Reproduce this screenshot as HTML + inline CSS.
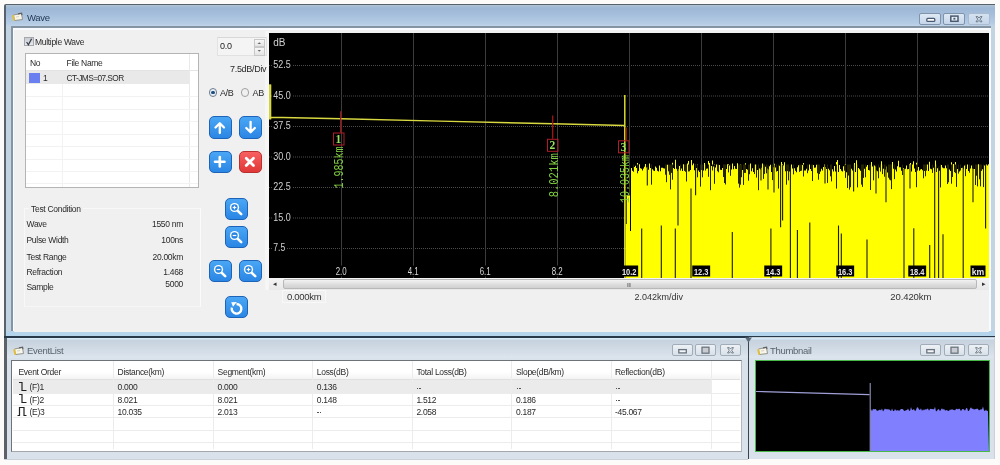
<!DOCTYPE html>
<html><head><meta charset="utf-8">
<style>
*{box-sizing:border-box;margin:0;padding:0}
html,body{width:1000px;height:465px;overflow:hidden;will-change:transform;background:#fcfbf9;font-family:"Liberation Sans",sans-serif;font-size:9px;color:#2a2a2a}
.a{position:absolute}
.t{position:absolute;white-space:nowrap;line-height:10px;letter-spacing:-0.3px}
.frame{position:absolute;border:2px solid #4a5866;}
.btn{position:absolute;width:22px;height:12px;border:1px solid #7f93ab;border-radius:2px;background:linear-gradient(#dfe9f5,#c5d6ea)}
.ibtn{position:absolute;width:21px;height:12px;border:1px solid #a0acb8;border-radius:2px;background:linear-gradient(#eef2f6,#d8e0e8)}
.bb{position:absolute;width:22.5px;height:22.5px;border-radius:5px;border:1.5px solid #1d63b8;background:linear-gradient(#4aa6f4,#2a86e4)}
.cell{position:absolute;white-space:nowrap;line-height:10px;letter-spacing:-0.3px}
</style></head><body>
<!-- Wave window -->
<div class="a" style="left:4px;top:3.5px;width:991px;height:334.5px;background:#56626c;border-top-left-radius:2px"></div>
<div class="a" style="left:6px;top:5.3px;width:989px;height:330.5px;background:#c2d4e2"></div>
<div class="a" style="left:6px;top:331px;width:989px;height:4.8px;background:#b4d4ec"></div>
<div class="a" style="left:6px;top:5.3px;width:989px;height:21px;background:linear-gradient(#b2c4d4 0,#9db7d5 15%,#a5bedb 45%,#b5cce5 88%,#c0d4e8 100%)"></div>
<!-- client -->
<div class="a" style="left:11px;top:26.2px;width:980px;height:305.3px;background:#8494a2"></div>
<div class="a" style="left:12.5px;top:27.9px;width:978.3px;height:303.6px;background:#f8fbff"></div>
<div class="a" style="left:14px;top:29.5px;width:975px;height:302px;background:#f0f0f0"></div>
<div class="a" style="left:264.5px;top:31px;width:5px;height:259px;background:#f6f6f6"></div>
<!-- title -->
<svg class="a" style="left:12px;top:12.2px" width="12" height="9"><path d="M1.5,3 L9.5,1.5 L10.5,7.5 L2.5,8.5 Z" fill="#f8f6ea" stroke="#8a8a80" stroke-width="0.9"/><path d="M1,3.2 L2.2,8.6" stroke="#e8c030" stroke-width="1.8"/><path d="M6,1.8 L9.6,1.2 L9.9,3.2" fill="none" stroke="#606060" stroke-width="1.2"/><path d="M4,5 L7,4.6" stroke="#c8c8c0" stroke-width="0.8"/></svg>
<div class="t" style="left:27px;top:13px;font-size:9.5px;color:#1e3550">Wave</div>
<div class="btn" style="left:919px;top:12.5px"><svg width="22" height="12" style="position:absolute;left:-1px;top:-1px"><rect x="7.8" y="5.4" width="8" height="3" fill="#fff" stroke="#4a5a70" stroke-width="1.3" rx="1"/></svg></div>
<div class="btn" style="left:943px;top:12.5px"><svg width="22" height="12" style="position:absolute;left:-1px;top:-1px"><rect x="7.8" y="3.1" width="7.2" height="5.2" fill="#e8eef4" stroke="#4a5a70" stroke-width="1.5"/><rect x="10.4" y="4.8" width="2" height="1.8" fill="#4a5a70"/></svg></div>
<div class="btn" style="left:967.5px;top:12.5px;background:linear-gradient(#d4e2f0,#c4d6ea);border-color:#aabbd0"><svg width="22" height="12" style="position:absolute;left:-1px;top:-1px"><path d="M8,3.6 L9.8,3.6 L11,5 L12.2,3.6 L14,3.6 L12.2,6.2 L14,8.8 L12.2,8.8 L11,7.4 L9.8,8.8 L8,8.8 L9.8,6.2 Z" fill="none" stroke="#707a86" stroke-width="1"/></svg></div>

<!-- left panel -->
<div class="a" style="left:24.3px;top:36.8px;width:9.3px;height:9.3px;border:1px solid #a4a8ac;background:linear-gradient(#c8ccd2,#e8eaee)"></div>
<svg class="a" style="left:24.3px;top:36.8px" width="10" height="10"><path d="M2.6,5 L4.4,7.8 L7.6,1.8" fill="none" stroke="#3a3e48" stroke-width="1.3"/></svg>
<div class="t" style="left:35px;top:37px;font-size:8.5px">Multiple Wave</div>

<div class="a" style="left:25px;top:53px;width:173.5px;height:134.5px;border:1px solid #b4b4b4;background:#fff"></div>
<div class="a" style="left:26px;top:70px;width:171.5px;height:1px;background:#e4e4e4"></div>
<div class="a" style="left:26px;top:71px;width:163px;height:13px;background:#e9e9e9"></div>
<div class="a" style="left:62px;top:84px;width:1px;height:103px;background:#f2f2f2"></div>
<div class="a" style="left:188.5px;top:54px;width:1px;height:133px;background:#eaeaea"></div>
<div class="a" style="left:26px;top:96.2px;width:171.5px;height:1px;background:#f2f2f2"></div>
<div class="a" style="left:26px;top:108.7px;width:171.5px;height:1px;background:#f2f2f2"></div>
<div class="a" style="left:26px;top:121.1px;width:171.5px;height:1px;background:#f2f2f2"></div>
<div class="a" style="left:26px;top:133.6px;width:171.5px;height:1px;background:#f2f2f2"></div>
<div class="a" style="left:26px;top:146.1px;width:171.5px;height:1px;background:#f2f2f2"></div>
<div class="a" style="left:26px;top:158.6px;width:171.5px;height:1px;background:#f2f2f2"></div>
<div class="a" style="left:26px;top:171.1px;width:171.5px;height:1px;background:#f2f2f2"></div>
<div class="a" style="left:26px;top:182.6px;width:171.5px;height:1px;background:#f2f2f2"></div>
<div class="t" style="left:30px;top:58px;font-size:8.5px">No</div>
<div class="t" style="left:66.5px;top:58px;font-size:8.5px">File Name</div>
<div class="a" style="left:29px;top:72.5px;width:11px;height:10.5px;background:#6a80f0"></div>
<div class="t" style="left:43px;top:73px;font-size:8.5px">1</div>
<div class="t" style="left:66.5px;top:73.2px;font-size:8.3px;letter-spacing:-0.55px">CT-JMS=07.SOR</div>

<div class="a" style="left:24px;top:208px;width:177px;height:99px;border:1px solid #f8f8f8;border-right-color:#fbfbfb;border-bottom-color:#f6f6f6"></div>
<div class="t" style="left:29px;top:204px;padding:0 2px;background:#f0f0f0;font-size:8.5px">Test Condition</div>
<div class="t" style="left:26.5px;top:219px;font-size:8.5px">Wave</div>
<div class="t" style="left:26.5px;top:235px;font-size:8.5px">Pulse Width</div>
<div class="t" style="left:26.5px;top:252px;font-size:8.5px">Test Range</div>
<div class="t" style="left:26.5px;top:267px;font-size:8.5px">Refraction</div>
<div class="t" style="left:26.5px;top:282px;font-size:8.5px">Sample</div>
<div class="t" style="right:817px;top:219px;font-size:8.5px">1550 nm</div>
<div class="t" style="right:817px;top:235px;font-size:8.5px">100ns</div>
<div class="t" style="right:817px;top:252px;font-size:8.5px">20.00km</div>
<div class="t" style="right:817px;top:267px;font-size:8.5px">1.468</div>
<div class="t" style="right:817px;top:279px;font-size:8.5px">5000</div>

<!-- spinbox -->
<div class="a" style="left:217px;top:37px;width:49.5px;height:19px;border:1px solid #e2e2e2;border-top-color:#d8d8d8;background:#f4f4f4"></div>
<div class="t" style="left:220px;top:40.5px;font-size:9px;color:#222">0.0</div>
<div class="a" style="left:254px;top:39px;width:10.5px;height:8px;border:1px solid #c8c8c8;background:linear-gradient(#f8f8f8,#e4e4e4)"></div>
<div class="a" style="left:254px;top:47px;width:10.5px;height:8.5px;border:1px solid #c8c8c8;background:linear-gradient(#f8f8f8,#e4e4e4)"></div>
<svg class="a" style="left:254px;top:39px" width="11" height="17"><path d="M3.6,5 L7,5 L5.3,3.2 Z" fill="#666"/><path d="M3.6,11 L7,11 L5.3,12.8 Z" fill="#666"/></svg>

<div class="t" style="left:230px;top:64.2px;font-size:9px;letter-spacing:-0.3px">7.5dB/Div</div>

<!-- radios -->
<div class="a" style="left:208.5px;top:88px;width:8.5px;height:8.5px;border-radius:50%;border:1px solid #708090;background:#e8eef4"><div class="a" style="left:1.5px;top:1.5px;width:3.5px;height:3.5px;border-radius:50%;background:#1c4e80"></div></div>
<div class="t" style="left:220px;top:87.5px;font-size:9px;letter-spacing:-0.4px">A/B</div>
<div class="a" style="left:240.5px;top:88px;width:8.5px;height:8.5px;border-radius:50%;border:1px solid #a0a0a0;background:#f0f0f0"></div>
<div class="t" style="left:252.5px;top:87.5px;font-size:9px;letter-spacing:-0.3px">AB</div>

<!-- buttons -->
<div class="bb" style="left:209px;top:116.3px;"><svg width="20" height="20" style="position:absolute;left:0;top:0"><path d="M9.8,16 V6.5 M5.5,10.5 L9.8,6.2 L14,10.5" stroke="#fff" stroke-width="2.3" fill="none" stroke-linecap="round" stroke-linejoin="round"/></svg></div>
<div class="bb" style="left:239.4px;top:116.3px;"><svg width="20" height="20" style="position:absolute;left:0;top:0"><path d="M10.6,4.8 V15 M6.3,11 L10.6,15.3 L14.8,11" stroke="#fff" stroke-width="2.3" fill="none" stroke-linecap="round" stroke-linejoin="round"/></svg></div>
<div class="bb" style="left:209px;top:150.6px;"><svg width="20" height="20" style="position:absolute;left:0;top:0"><path d="M9.8,5 V14.5 M5,9.8 H14.5" stroke="#fff" stroke-width="2.6" fill="none" stroke-linecap="round"/></svg></div>
<div class="bb" style="left:239.4px;top:150.6px;border-color:#b83030;background:linear-gradient(#f86060,#e03838)"><svg width="20" height="20" style="position:absolute;left:0;top:0"><path d="M6.2,6.2 L13.5,13.5 M13.5,6.2 L6.2,13.5" stroke="#fff" stroke-width="2.8" fill="none" stroke-linecap="round"/></svg></div>
<div class="bb" style="left:225.3px;top:197.5px;"><svg width="20" height="20" style="position:absolute;left:0;top:0"><circle cx="8.5" cy="8.5" r="4.6" fill="#fff"/><circle cx="8.5" cy="8.5" r="3.2" fill="#2a86e4"/><path d="M11.8,11.8 L15.2,15.2" stroke="#fff" stroke-width="2.6" stroke-linecap="round"/><path d="M6.7,8.5 H10.3" stroke="#fff" stroke-width="1.2"/><path d="M8.5,6.7 V10.3" stroke="#fff" stroke-width="1.2"/></svg></div>
<div class="bb" style="left:225.3px;top:225.5px;"><svg width="20" height="20" style="position:absolute;left:0;top:0"><circle cx="8.5" cy="8.5" r="4.6" fill="#fff"/><circle cx="8.5" cy="8.5" r="3.2" fill="#2a86e4"/><path d="M11.8,11.8 L15.2,15.2" stroke="#fff" stroke-width="2.6" stroke-linecap="round"/><path d="M6.7,8.5 H10.3" stroke="#fff" stroke-width="1.2"/></svg></div>
<div class="bb" style="left:209px;top:259.8px;"><svg width="20" height="20" style="position:absolute;left:0;top:0"><circle cx="8.5" cy="8.5" r="4.6" fill="#fff"/><circle cx="8.5" cy="8.5" r="3.2" fill="#2a86e4"/><path d="M11.8,11.8 L15.2,15.2" stroke="#fff" stroke-width="2.6" stroke-linecap="round"/><path d="M6.7,8.5 H10.3" stroke="#fff" stroke-width="1.2"/></svg></div>
<div class="bb" style="left:239.4px;top:259.8px;"><svg width="20" height="20" style="position:absolute;left:0;top:0"><circle cx="8.5" cy="8.5" r="4.6" fill="#fff"/><circle cx="8.5" cy="8.5" r="3.2" fill="#2a86e4"/><path d="M11.8,11.8 L15.2,15.2" stroke="#fff" stroke-width="2.6" stroke-linecap="round"/><path d="M6.7,8.5 H10.3" stroke="#fff" stroke-width="1.2"/><path d="M8.5,6.7 V10.3" stroke="#fff" stroke-width="1.2"/></svg></div>
<div class="bb" style="left:225.3px;top:295.6px;"><svg width="20" height="20" style="position:absolute;left:0;top:0"><path d="M10.5,7 A4.8,4.8 0 1 1 5.9,10.6" stroke="#fff" stroke-width="2.4" fill="none" stroke-linecap="butt"/><path d="M5.2,5.2 L10.8,5.0 L7.0,9.8 Z" fill="#fff"/></svg></div>

<!-- chart -->
<div class="a" style="left:269px;top:32.5px;width:720px;height:245.5px;overflow:hidden">
<svg width="720" height="245.5" viewBox="0 0 720 245.5" style="position:absolute;left:0;top:0">
<rect width="720" height="245.5" fill="#000"/>
<line x1="0" y1="32.5" x2="720" y2="32.5" stroke="#4c4c4c" stroke-width="1" stroke-dasharray="1,1"/>
<line x1="0" y1="63.0" x2="720" y2="63.0" stroke="#4c4c4c" stroke-width="1" stroke-dasharray="1,1"/>
<line x1="0" y1="93.5" x2="720" y2="93.5" stroke="#4c4c4c" stroke-width="1" stroke-dasharray="1,1"/>
<line x1="0" y1="124.0" x2="720" y2="124.0" stroke="#4c4c4c" stroke-width="1" stroke-dasharray="1,1"/>
<line x1="0" y1="154.5" x2="720" y2="154.5" stroke="#4c4c4c" stroke-width="1" stroke-dasharray="1,1"/>
<line x1="0" y1="185.0" x2="720" y2="185.0" stroke="#4c4c4c" stroke-width="1" stroke-dasharray="1,1"/>
<line x1="0" y1="215.5" x2="720" y2="215.5" stroke="#4c4c4c" stroke-width="1" stroke-dasharray="1,1"/>
<line x1="72.5" y1="0" x2="72.5" y2="245.5" stroke="#3c3c3c" stroke-width="1"/>
<line x1="144.5" y1="0" x2="144.5" y2="245.5" stroke="#3c3c3c" stroke-width="1"/>
<line x1="216.5" y1="0" x2="216.5" y2="245.5" stroke="#3c3c3c" stroke-width="1"/>
<line x1="288.5" y1="0" x2="288.5" y2="245.5" stroke="#3c3c3c" stroke-width="1"/>
<line x1="360.5" y1="0" x2="360.5" y2="245.5" stroke="#3c3c3c" stroke-width="1"/>
<line x1="432.5" y1="0" x2="432.5" y2="245.5" stroke="#3c3c3c" stroke-width="1"/>
<line x1="504.5" y1="0" x2="504.5" y2="245.5" stroke="#3c3c3c" stroke-width="1"/>
<line x1="576.5" y1="0" x2="576.5" y2="245.5" stroke="#3c3c3c" stroke-width="1"/>
<line x1="648.5" y1="0" x2="648.5" y2="245.5" stroke="#3c3c3c" stroke-width="1"/>
<path d="M362,245.5 L362,134.9 L363,134.9 L363,137.8 L364,137.8 L364,134.9 L365,134.9 L365,134.1 L366,134.1 L366,132.8 L367,132.8 L367,135.0 L368,135.0 L368,130.1 L369,130.1 L369,138.1 L370,138.1 L370,131.2 L371,131.2 L371,135.3 L372,135.3 L372,135.7 L373,135.7 L373,137.4 L374,137.4 L374,135.6 L375,135.6 L375,133.8 L376,133.8 L376,131.1 L377,131.1 L377,134.4 L378,134.4 L378,134.0 L379,134.0 L379,136.7 L380,136.7 L380,130.6 L381,130.6 L381,135.0 L382,135.0 L382,136.2 L383,136.2 L383,136.3 L384,136.3 L384,137.5 L385,137.5 L385,138.0 L386,138.0 L386,133.4 L387,133.4 L387,134.8 L388,134.8 L388,137.7 L389,137.7 L389,138.5 L390,138.5 L390,132.5 L391,132.5 L391,138.2 L392,138.2 L392,134.8 L393,134.8 L393,134.8 L394,134.8 L394,135.3 L395,135.3 L395,135.4 L396,135.4 L396,138.5 L397,138.5 L397,136.3 L398,136.3 L398,131.7 L399,131.7 L399,132.6 L400,132.6 L400,134.5 L401,134.5 L401,135.6 L402,135.6 L402,134.2 L403,134.2 L403,129.7 L404,129.7 L404,135.1 L405,135.1 L405,135.9 L406,135.9 L406,126.7 L407,126.7 L407,135.7 L408,135.7 L408,137.9 L409,137.9 L409,136.3 L410,136.3 L410,133.1 L411,133.1 L411,133.6 L412,133.6 L412,135.4 L413,135.4 L413,137.9 L414,137.9 L414,131.3 L415,131.3 L415,135.7 L416,135.7 L416,133.6 L417,133.6 L417,136.0 L418,136.0 L418,130.6 L419,130.6 L419,128.0 L420,128.0 L420,136.4 L421,136.4 L421,136.9 L422,136.9 L422,127.0 L423,127.0 L423,132.3 L424,132.3 L424,130.6 L425,130.6 L425,137.3 L426,137.3 L426,131.8 L427,131.8 L427,135.1 L428,135.1 L428,131.5 L429,131.5 L429,137.4 L430,137.4 L430,139.0 L431,139.0 L431,134.7 L432,134.7 L432,137.0 L433,137.0 L433,135.0 L434,135.0 L434,137.5 L435,137.5 L435,129.9 L436,129.9 L436,136.3 L437,136.3 L437,135.8 L438,135.8 L438,135.6 L439,135.6 L439,128.0 L440,128.0 L440,130.0 L441,130.0 L441,132.2 L442,132.2 L442,133.1 L443,133.1 L443,127.4 L444,127.4 L444,133.4 L445,133.4 L445,131.4 L446,131.4 L446,134.6 L447,134.6 L447,131.4 L448,131.4 L448,133.1 L449,133.1 L449,132.7 L450,132.7 L450,131.9 L451,131.9 L451,136.7 L452,136.7 L452,137.0 L453,137.0 L453,135.0 L454,135.0 L454,132.4 L455,132.4 L455,132.9 L456,132.9 L456,137.4 L457,137.4 L457,136.0 L458,136.0 L458,131.2 L459,131.2 L459,131.0 L460,131.0 L460,132.6 L461,132.6 L461,136.9 L462,136.9 L462,136.6 L463,136.6 L463,130.4 L464,130.4 L464,136.2 L465,136.2 L465,132.9 L466,132.9 L466,135.8 L467,135.8 L467,135.9 L468,135.9 L468,130.2 L469,130.2 L469,133.2 L470,133.2 L470,134.8 L471,134.8 L471,131.4 L472,131.4 L472,138.1 L473,138.1 L473,137.1 L474,137.1 L474,134.0 L475,134.0 L475,132.8 L476,132.8 L476,130.3 L477,130.3 L477,136.1 L478,136.1 L478,136.7 L479,136.7 L479,135.0 L480,135.0 L480,136.3 L481,136.3 L481,130.6 L482,130.6 L482,138.2 L483,138.2 L483,135.3 L484,135.3 L484,138.9 L485,138.9 L485,136.0 L486,136.0 L486,131.4 L487,131.4 L487,135.0 L488,135.0 L488,137.0 L489,137.0 L489,138.5 L490,138.5 L490,135.6 L491,135.6 L491,136.6 L492,136.6 L492,134.7 L493,134.7 L493,130.5 L494,130.5 L494,137.9 L495,137.9 L495,137.0 L496,137.0 L496,133.7 L497,133.7 L497,138.1 L498,138.1 L498,135.6 L499,135.6 L499,136.4 L500,136.4 L500,133.3 L501,133.3 L501,131.7 L502,131.7 L502,139.1 L503,139.1 L503,135.2 L504,135.2 L504,134.3 L505,134.3 L505,130.7 L506,130.7 L506,134.5 L507,134.5 L507,133.9 L508,133.9 L508,137.9 L509,137.9 L509,137.8 L510,137.8 L510,132.8 L511,132.8 L511,134.0 L512,134.0 L512,129.0 L513,129.0 L513,130.9 L514,130.9 L514,132.4 L515,132.4 L515,129.3 L516,129.3 L516,138.2 L517,138.2 L517,134.2 L518,134.2 L518,132.8 L519,132.8 L519,137.2 L520,137.2 L520,138.6 L521,138.6 L521,138.5 L522,138.5 L522,131.5 L523,131.5 L523,135.6 L524,135.6 L524,133.3 L525,133.3 L525,135.2 L526,135.2 L526,137.7 L527,137.7 L527,139.3 L528,139.3 L528,134.2 L529,134.2 L529,132.2 L530,132.2 L530,136.1 L531,136.1 L531,136.7 L532,136.7 L532,135.6 L533,135.6 L533,131.9 L534,131.9 L534,129.9 L535,129.9 L535,137.6 L536,137.6 L536,137.4 L537,137.4 L537,135.8 L538,135.8 L538,137.7 L539,137.7 L539,137.6 L540,137.6 L540,131.6 L541,131.6 L541,136.0 L542,136.0 L542,138.1 L543,138.1 L543,136.4 L544,136.4 L544,131.9 L545,131.9 L545,134.8 L546,134.8 L546,134.5 L547,134.5 L547,131.7 L548,131.7 L548,136.6 L549,136.6 L549,133.2 L550,133.2 L550,139.1 L551,139.1 L551,138.5 L552,138.5 L552,135.7 L553,135.7 L553,137.6 L554,137.6 L554,133.9 L555,133.9 L555,131.4 L556,131.4 L556,133.9 L557,133.9 L557,136.0 L558,136.0 L558,136.3 L559,136.3 L559,135.7 L560,135.7 L560,137.3 L561,137.3 L561,133.1 L562,133.1 L562,136.0 L563,136.0 L563,136.2 L564,136.2 L564,138.6 L565,138.6 L565,133.0 L566,133.0 L566,138.6 L567,138.6 L567,129.1 L568,129.1 L568,127.0 L569,127.0 L569,138.9 L570,138.9 L570,132.0 L571,132.0 L571,136.1 L572,136.1 L572,137.7 L573,137.7 L573,138.5 L574,138.5 L574,133.3 L575,133.3 L575,134.9 L576,134.9 L576,130.9 L577,130.9 L577,139.3 L578,139.3 L578,132.8 L579,132.8 L579,133.8 L580,133.8 L580,135.8 L581,135.8 L581,135.5 L582,135.5 L582,135.8 L583,135.8 L583,137.5 L584,137.5 L584,135.7 L585,135.7 L585,130.0 L586,130.0 L586,139.1 L587,139.1 L587,127.3 L588,127.3 L588,132.5 L589,132.5 L589,135.1 L590,135.1 L590,136.2 L591,136.2 L591,137.7 L592,137.7 L592,132.3 L593,132.3 L593,134.6 L594,134.6 L594,137.4 L595,137.4 L595,135.8 L596,135.8 L596,137.3 L597,137.3 L597,133.8 L598,133.8 L598,132.0 L599,132.0 L599,136.9 L600,136.9 L600,136.1 L601,136.1 L601,134.2 L602,134.2 L602,129.0 L603,129.0 L603,133.5 L604,133.5 L604,137.7 L605,137.7 L605,132.5 L606,132.5 L606,133.5 L607,133.5 L607,137.5 L608,137.5 L608,138.2 L609,138.2 L609,135.2 L610,135.2 L610,134.4 L611,134.4 L611,135.1 L612,135.1 L612,128.2 L613,128.2 L613,137.4 L614,137.4 L614,135.8 L615,135.8 L615,136.5 L616,136.5 L616,136.5 L617,136.5 L617,133.6 L618,133.6 L618,139.4 L619,139.4 L619,133.5 L620,133.5 L620,135.2 L621,135.2 L621,135.1 L622,135.1 L622,136.7 L623,136.7 L623,129.1 L624,129.1 L624,135.8 L625,135.8 L625,137.2 L626,137.2 L626,136.6 L627,136.6 L627,138.6 L628,138.6 L628,133.2 L629,133.2 L629,127.7 L630,127.7 L630,134.3 L631,134.3 L631,134.2 L632,134.2 L632,137.7 L633,137.7 L633,138.2 L634,138.2 L634,134.9 L635,134.9 L635,136.3 L636,136.3 L636,135.8 L637,135.8 L637,132.4 L638,132.4 L638,136.3 L639,136.3 L639,136.1 L640,136.1 L640,131.3 L641,131.3 L641,129.9 L642,129.9 L642,138.4 L643,138.4 L643,131.6 L644,131.6 L644,128.3 L645,128.3 L645,135.5 L646,135.5 L646,139.1 L647,139.1 L647,129.7 L648,129.7 L648,136.9 L649,136.9 L649,134.0 L650,134.0 L650,137.7 L651,137.7 L651,136.5 L652,136.5 L652,135.9 L653,135.9 L653,137.3 L654,137.3 L654,133.7 L655,133.7 L655,136.7 L656,136.7 L656,136.6 L657,136.6 L657,136.7 L658,136.7 L658,131.5 L659,131.5 L659,138.1 L660,138.1 L660,128.7 L661,128.7 L661,135.8 L662,135.8 L662,136.3 L663,136.3 L663,135.9 L664,135.9 L664,134.8 L665,134.8 L665,138.2 L666,138.2 L666,127.6 L667,127.6 L667,132.6 L668,132.6 L668,135.2 L669,135.2 L669,135.2 L670,135.2 L670,137.8 L671,137.8 L671,137.4 L672,137.4 L672,132.0 L673,132.0 L673,134.6 L674,134.6 L674,135.3 L675,135.3 L675,135.3 L676,135.3 L676,132.6 L677,132.6 L677,135.3 L678,135.3 L678,135.9 L679,135.9 L679,138.3 L680,138.3 L680,136.6 L681,136.6 L681,137.9 L682,137.9 L682,129.2 L683,129.2 L683,134.5 L684,134.5 L684,131.0 L685,131.0 L685,136.2 L686,136.2 L686,129.0 L687,129.0 L687,135.3 L688,135.3 L688,136.1 L689,136.1 L689,137.6 L690,137.6 L690,138.5 L691,138.5 L691,132.7 L692,132.7 L692,134.9 L693,134.9 L693,134.7 L694,134.7 L694,136.2 L695,136.2 L695,132.6 L696,132.6 L696,136.6 L697,136.6 L697,136.0 L698,136.0 L698,131.4 L699,131.4 L699,138.0 L700,138.0 L700,138.2 L701,138.2 L701,135.5 L702,135.5 L702,132.4 L703,132.4 L703,135.4 L704,135.4 L704,135.9 L705,135.9 L705,135.9 L706,135.9 L706,133.7 L707,133.7 L707,136.7 L708,136.7 L708,136.6 L709,136.6 L709,131.3 L710,131.3 L710,138.6 L711,138.6 L711,133.4 L712,133.4 L712,135.3 L713,135.3 L713,136.3 L714,136.3 L714,138.6 L715,138.6 L715,132.5 L716,132.5 L716,135.4 L717,135.4 L717,131.4 L718,131.4 L718,132.5 L719,132.5 L719,131.3 L720,131.3 L720,245.5 Z" fill="#ffff00"/>
<rect x="356.5" y="162.5" width="6" height="83.0" fill="#ffff00"/>
<line x1="357.20000000000005" y1="162.5" x2="357.20000000000005" y2="191.0" stroke="#000" stroke-width="1"/>
<line x1="361.5" y1="127.5" x2="361.5" y2="198.0" stroke="#000" stroke-width="1"/>
<line x1="372.7" y1="195.5" x2="372.7" y2="245.5" stroke="#1c1c00" stroke-width="1.1"/>
<line x1="392.3" y1="192.5" x2="392.3" y2="245.5" stroke="#1c1c00" stroke-width="1.1"/>
<line x1="406.3" y1="195.5" x2="406.3" y2="245.5" stroke="#1c1c00" stroke-width="1.1"/>
<line x1="422.0" y1="155.5" x2="422.0" y2="245.5" stroke="#1c1c00" stroke-width="1.1"/>
<line x1="463.3" y1="199.1" x2="463.3" y2="245.5" stroke="#1c1c00" stroke-width="1.1"/>
<line x1="501.9" y1="195.5" x2="501.9" y2="245.5" stroke="#1c1c00" stroke-width="1.1"/>
<line x1="521.4" y1="133.5" x2="521.4" y2="245.5" stroke="#1c1c00" stroke-width="1.1"/>
<line x1="528.4" y1="197.1" x2="528.4" y2="245.5" stroke="#1c1c00" stroke-width="1.1"/>
<line x1="540.8" y1="189.5" x2="540.8" y2="245.5" stroke="#1c1c00" stroke-width="1.1"/>
<line x1="569.5" y1="192.5" x2="569.5" y2="245.5" stroke="#1c1c00" stroke-width="1.1"/>
<line x1="572.3" y1="200.5" x2="572.3" y2="245.5" stroke="#1c1c00" stroke-width="1.1"/>
<line x1="598.0" y1="206.5" x2="598.0" y2="245.5" stroke="#1c1c00" stroke-width="1.1"/>
<line x1="635.0" y1="135.5" x2="635.0" y2="245.5" stroke="#1c1c00" stroke-width="1.1"/>
<line x1="644.8" y1="195.2" x2="644.8" y2="245.5" stroke="#1c1c00" stroke-width="1.1"/>
<line x1="660.7" y1="211.9" x2="660.7" y2="245.5" stroke="#1c1c00" stroke-width="1.1"/>
<line x1="665.7" y1="133.5" x2="665.7" y2="245.5" stroke="#1c1c00" stroke-width="1.1"/>
<line x1="669.6" y1="133.5" x2="669.6" y2="245.5" stroke="#1c1c00" stroke-width="1.1"/>
<line x1="674.0" y1="201.3" x2="674.0" y2="245.5" stroke="#1c1c00" stroke-width="1.1"/>
<line x1="694.2" y1="133.5" x2="694.2" y2="245.5" stroke="#1c1c00" stroke-width="1.1"/>
<line x1="409.0" y1="131.5" x2="409.0" y2="192.5" stroke="#1c1c00" stroke-width="1.1"/>
<line x1="426.6" y1="131.5" x2="426.6" y2="162.2" stroke="#1c1c00" stroke-width="1.1"/>
<line x1="378.3" y1="131.5" x2="378.3" y2="152.5" stroke="#1c1c00" stroke-width="1.1"/>
<line x1="511.6" y1="131.5" x2="511.6" y2="194.3" stroke="#1c1c00" stroke-width="1.1"/>
<line x1="513.6" y1="131.5" x2="513.6" y2="187.5" stroke="#1c1c00" stroke-width="1.1"/>
<line x1="499.0" y1="131.5" x2="499.0" y2="156.5" stroke="#1c1c00" stroke-width="1.1"/>
<line x1="505.0" y1="131.5" x2="505.0" y2="159.5" stroke="#1c1c00" stroke-width="1.1"/>
<line x1="492.0" y1="131.5" x2="492.0" y2="147.5" stroke="#1c1c00" stroke-width="1.1"/>
<line x1="584.6" y1="131.5" x2="584.6" y2="158.5" stroke="#1c1c00" stroke-width="1.1"/>
<line x1="607.0" y1="131.5" x2="607.0" y2="160.5" stroke="#1c1c00" stroke-width="1.1"/>
<line x1="617.0" y1="131.5" x2="617.0" y2="169.2" stroke="#1c1c00" stroke-width="1.1"/>
<line x1="556.0" y1="131.5" x2="556.0" y2="150.5" stroke="#1c1c00" stroke-width="1.1"/>
<line x1="704.0" y1="131.5" x2="704.0" y2="169.2" stroke="#1c1c00" stroke-width="1.1"/>
<line x1="716.6" y1="131.5" x2="716.6" y2="195.5" stroke="#1c1c00" stroke-width="1.1"/>
<line x1="641.0" y1="131.5" x2="641.0" y2="155.5" stroke="#1c1c00" stroke-width="1.1"/>
<line x1="364.5" y1="131.5" x2="364.5" y2="138.8" stroke="#242400" stroke-width="1"/>
<line x1="368.5" y1="131.5" x2="368.5" y2="140.3" stroke="#242400" stroke-width="1"/>
<line x1="382.5" y1="131.5" x2="382.5" y2="151.7" stroke="#242400" stroke-width="1"/>
<line x1="396.5" y1="131.5" x2="396.5" y2="141.7" stroke="#242400" stroke-width="1"/>
<line x1="397.5" y1="131.5" x2="397.5" y2="149.2" stroke="#242400" stroke-width="1"/>
<line x1="399.5" y1="131.5" x2="399.5" y2="138.3" stroke="#242400" stroke-width="1"/>
<line x1="400.5" y1="131.5" x2="400.5" y2="141.8" stroke="#242400" stroke-width="1"/>
<line x1="401.5" y1="131.5" x2="401.5" y2="156.4" stroke="#242400" stroke-width="1"/>
<line x1="402.5" y1="131.5" x2="402.5" y2="139.9" stroke="#242400" stroke-width="1"/>
<line x1="403.5" y1="131.5" x2="403.5" y2="146.7" stroke="#242400" stroke-width="1"/>
<line x1="411.5" y1="131.5" x2="411.5" y2="137.6" stroke="#242400" stroke-width="1"/>
<line x1="415.5" y1="131.5" x2="415.5" y2="137.9" stroke="#242400" stroke-width="1"/>
<line x1="416.5" y1="131.5" x2="416.5" y2="138.8" stroke="#242400" stroke-width="1"/>
<line x1="417.5" y1="131.5" x2="417.5" y2="148.5" stroke="#242400" stroke-width="1"/>
<line x1="419.5" y1="131.5" x2="419.5" y2="138.5" stroke="#242400" stroke-width="1"/>
<line x1="420.5" y1="131.5" x2="420.5" y2="138.3" stroke="#242400" stroke-width="1"/>
<line x1="428.5" y1="131.5" x2="428.5" y2="144.3" stroke="#242400" stroke-width="1"/>
<line x1="431.5" y1="131.5" x2="431.5" y2="153.6" stroke="#242400" stroke-width="1"/>
<line x1="433.5" y1="131.5" x2="433.5" y2="144.3" stroke="#242400" stroke-width="1"/>
<line x1="436.5" y1="131.5" x2="436.5" y2="137.6" stroke="#242400" stroke-width="1"/>
<line x1="439.5" y1="131.5" x2="439.5" y2="143.8" stroke="#242400" stroke-width="1"/>
<line x1="441.5" y1="131.5" x2="441.5" y2="157.2" stroke="#242400" stroke-width="1"/>
<line x1="443.5" y1="131.5" x2="443.5" y2="137.5" stroke="#242400" stroke-width="1"/>
<line x1="445.5" y1="131.5" x2="445.5" y2="150.8" stroke="#242400" stroke-width="1"/>
<line x1="448.5" y1="131.5" x2="448.5" y2="138.2" stroke="#242400" stroke-width="1"/>
<line x1="449.5" y1="131.5" x2="449.5" y2="139.3" stroke="#242400" stroke-width="1"/>
<line x1="454.5" y1="131.5" x2="454.5" y2="144.0" stroke="#242400" stroke-width="1"/>
<line x1="455.5" y1="131.5" x2="455.5" y2="150.0" stroke="#242400" stroke-width="1"/>
<line x1="456.5" y1="131.5" x2="456.5" y2="151.5" stroke="#242400" stroke-width="1"/>
<line x1="459.5" y1="131.5" x2="459.5" y2="139.4" stroke="#242400" stroke-width="1"/>
<line x1="461.5" y1="131.5" x2="461.5" y2="142.8" stroke="#242400" stroke-width="1"/>
<line x1="469.5" y1="131.5" x2="469.5" y2="150.6" stroke="#242400" stroke-width="1"/>
<line x1="470.5" y1="131.5" x2="470.5" y2="154.6" stroke="#242400" stroke-width="1"/>
<line x1="471.5" y1="131.5" x2="471.5" y2="151.7" stroke="#242400" stroke-width="1"/>
<line x1="472.5" y1="131.5" x2="472.5" y2="144.2" stroke="#242400" stroke-width="1"/>
<line x1="474.5" y1="131.5" x2="474.5" y2="151.9" stroke="#242400" stroke-width="1"/>
<line x1="475.5" y1="131.5" x2="475.5" y2="139.9" stroke="#242400" stroke-width="1"/>
<line x1="476.5" y1="131.5" x2="476.5" y2="139.9" stroke="#242400" stroke-width="1"/>
<line x1="479.5" y1="131.5" x2="479.5" y2="147.7" stroke="#242400" stroke-width="1"/>
<line x1="480.5" y1="131.5" x2="480.5" y2="141.2" stroke="#242400" stroke-width="1"/>
<line x1="485.5" y1="131.5" x2="485.5" y2="141.0" stroke="#242400" stroke-width="1"/>
<line x1="487.5" y1="131.5" x2="487.5" y2="144.6" stroke="#242400" stroke-width="1"/>
<line x1="489.5" y1="131.5" x2="489.5" y2="157.2" stroke="#242400" stroke-width="1"/>
<line x1="494.5" y1="131.5" x2="494.5" y2="145.9" stroke="#242400" stroke-width="1"/>
<line x1="495.5" y1="131.5" x2="495.5" y2="140.9" stroke="#242400" stroke-width="1"/>
<line x1="497.5" y1="131.5" x2="497.5" y2="140.3" stroke="#242400" stroke-width="1"/>
<line x1="503.5" y1="131.5" x2="503.5" y2="147.1" stroke="#242400" stroke-width="1"/>
<line x1="507.5" y1="131.5" x2="507.5" y2="138.6" stroke="#242400" stroke-width="1"/>
<line x1="509.5" y1="131.5" x2="509.5" y2="155.6" stroke="#242400" stroke-width="1"/>
<line x1="517.5" y1="131.5" x2="517.5" y2="151.7" stroke="#242400" stroke-width="1"/>
<line x1="518.5" y1="131.5" x2="518.5" y2="138.1" stroke="#242400" stroke-width="1"/>
<line x1="519.5" y1="131.5" x2="519.5" y2="147.4" stroke="#242400" stroke-width="1"/>
<line x1="524.5" y1="131.5" x2="524.5" y2="141.4" stroke="#242400" stroke-width="1"/>
<line x1="530.5" y1="131.5" x2="530.5" y2="138.9" stroke="#242400" stroke-width="1"/>
<line x1="531.5" y1="131.5" x2="531.5" y2="138.0" stroke="#242400" stroke-width="1"/>
<line x1="532.5" y1="131.5" x2="532.5" y2="137.7" stroke="#242400" stroke-width="1"/>
<line x1="534.5" y1="131.5" x2="534.5" y2="143.5" stroke="#242400" stroke-width="1"/>
<line x1="538.5" y1="131.5" x2="538.5" y2="140.2" stroke="#242400" stroke-width="1"/>
<line x1="542.5" y1="131.5" x2="542.5" y2="137.5" stroke="#242400" stroke-width="1"/>
<line x1="543.5" y1="131.5" x2="543.5" y2="148.0" stroke="#242400" stroke-width="1"/>
<line x1="548.5" y1="131.5" x2="548.5" y2="140.2" stroke="#242400" stroke-width="1"/>
<line x1="549.5" y1="131.5" x2="549.5" y2="146.7" stroke="#242400" stroke-width="1"/>
<line x1="550.5" y1="131.5" x2="550.5" y2="141.0" stroke="#242400" stroke-width="1"/>
<line x1="558.5" y1="131.5" x2="558.5" y2="149.9" stroke="#242400" stroke-width="1"/>
<line x1="561.5" y1="131.5" x2="561.5" y2="143.3" stroke="#242400" stroke-width="1"/>
<line x1="562.5" y1="131.5" x2="562.5" y2="148.4" stroke="#242400" stroke-width="1"/>
<line x1="567.5" y1="131.5" x2="567.5" y2="155.6" stroke="#242400" stroke-width="1"/>
<line x1="575.5" y1="131.5" x2="575.5" y2="137.7" stroke="#242400" stroke-width="1"/>
<line x1="576.5" y1="131.5" x2="576.5" y2="144.9" stroke="#242400" stroke-width="1"/>
<line x1="578.5" y1="131.5" x2="578.5" y2="155.0" stroke="#242400" stroke-width="1"/>
<line x1="579.5" y1="131.5" x2="579.5" y2="142.5" stroke="#242400" stroke-width="1"/>
<line x1="580.5" y1="131.5" x2="580.5" y2="156.6" stroke="#242400" stroke-width="1"/>
<line x1="581.5" y1="131.5" x2="581.5" y2="154.2" stroke="#242400" stroke-width="1"/>
<line x1="588.5" y1="131.5" x2="588.5" y2="154.4" stroke="#242400" stroke-width="1"/>
<line x1="592.5" y1="131.5" x2="592.5" y2="151.6" stroke="#242400" stroke-width="1"/>
<line x1="593.5" y1="131.5" x2="593.5" y2="153.9" stroke="#242400" stroke-width="1"/>
<line x1="594.5" y1="131.5" x2="594.5" y2="144.9" stroke="#242400" stroke-width="1"/>
<line x1="596.5" y1="131.5" x2="596.5" y2="144.3" stroke="#242400" stroke-width="1"/>
<line x1="600.5" y1="131.5" x2="600.5" y2="137.5" stroke="#242400" stroke-width="1"/>
<line x1="601.5" y1="131.5" x2="601.5" y2="157.0" stroke="#242400" stroke-width="1"/>
<line x1="604.5" y1="131.5" x2="604.5" y2="147.3" stroke="#242400" stroke-width="1"/>
<line x1="609.5" y1="131.5" x2="609.5" y2="145.3" stroke="#242400" stroke-width="1"/>
<line x1="611.5" y1="131.5" x2="611.5" y2="138.6" stroke="#242400" stroke-width="1"/>
<line x1="613.5" y1="131.5" x2="613.5" y2="141.1" stroke="#242400" stroke-width="1"/>
<line x1="615.5" y1="131.5" x2="615.5" y2="143.7" stroke="#242400" stroke-width="1"/>
<line x1="619.5" y1="131.5" x2="619.5" y2="144.7" stroke="#242400" stroke-width="1"/>
<line x1="620.5" y1="131.5" x2="620.5" y2="146.5" stroke="#242400" stroke-width="1"/>
<line x1="621.5" y1="131.5" x2="621.5" y2="147.3" stroke="#242400" stroke-width="1"/>
<line x1="622.5" y1="131.5" x2="622.5" y2="156.1" stroke="#242400" stroke-width="1"/>
<line x1="625.5" y1="131.5" x2="625.5" y2="146.1" stroke="#242400" stroke-width="1"/>
<line x1="633.5" y1="131.5" x2="633.5" y2="142.0" stroke="#242400" stroke-width="1"/>
<line x1="647.5" y1="131.5" x2="647.5" y2="154.2" stroke="#242400" stroke-width="1"/>
<line x1="648.5" y1="131.5" x2="648.5" y2="137.6" stroke="#242400" stroke-width="1"/>
<line x1="654.5" y1="131.5" x2="654.5" y2="145.3" stroke="#242400" stroke-width="1"/>
<line x1="655.5" y1="131.5" x2="655.5" y2="138.0" stroke="#242400" stroke-width="1"/>
<line x1="656.5" y1="131.5" x2="656.5" y2="143.3" stroke="#242400" stroke-width="1"/>
<line x1="657.5" y1="131.5" x2="657.5" y2="137.6" stroke="#242400" stroke-width="1"/>
<line x1="663.5" y1="131.5" x2="663.5" y2="139.9" stroke="#242400" stroke-width="1"/>
<line x1="667.5" y1="131.5" x2="667.5" y2="139.0" stroke="#242400" stroke-width="1"/>
<line x1="671.5" y1="131.5" x2="671.5" y2="154.4" stroke="#242400" stroke-width="1"/>
<line x1="678.5" y1="131.5" x2="678.5" y2="151.0" stroke="#242400" stroke-width="1"/>
<line x1="679.5" y1="131.5" x2="679.5" y2="149.3" stroke="#242400" stroke-width="1"/>
<line x1="682.5" y1="131.5" x2="682.5" y2="150.7" stroke="#242400" stroke-width="1"/>
<line x1="683.5" y1="131.5" x2="683.5" y2="144.0" stroke="#242400" stroke-width="1"/>
<line x1="685.5" y1="131.5" x2="685.5" y2="139.1" stroke="#242400" stroke-width="1"/>
<line x1="686.5" y1="131.5" x2="686.5" y2="140.1" stroke="#242400" stroke-width="1"/>
<line x1="687.5" y1="131.5" x2="687.5" y2="153.9" stroke="#242400" stroke-width="1"/>
<line x1="689.5" y1="131.5" x2="689.5" y2="140.6" stroke="#242400" stroke-width="1"/>
<line x1="691.5" y1="131.5" x2="691.5" y2="137.5" stroke="#242400" stroke-width="1"/>
<line x1="696.5" y1="131.5" x2="696.5" y2="143.2" stroke="#242400" stroke-width="1"/>
<line x1="700.5" y1="131.5" x2="700.5" y2="139.7" stroke="#242400" stroke-width="1"/>
<line x1="706.5" y1="131.5" x2="706.5" y2="152.0" stroke="#242400" stroke-width="1"/>
<line x1="707.5" y1="131.5" x2="707.5" y2="142.7" stroke="#242400" stroke-width="1"/>
<line x1="708.5" y1="131.5" x2="708.5" y2="153.4" stroke="#242400" stroke-width="1"/>
<line x1="710.5" y1="131.5" x2="710.5" y2="146.3" stroke="#242400" stroke-width="1"/>
<line x1="711.5" y1="131.5" x2="711.5" y2="153.4" stroke="#242400" stroke-width="1"/>
<line x1="712.5" y1="131.5" x2="712.5" y2="137.9" stroke="#242400" stroke-width="1"/>
<line x1="714.5" y1="131.5" x2="714.5" y2="154.1" stroke="#242400" stroke-width="1"/>
<polyline points="1,51.5 1,86.3 2,84.3 72,85.7 171,88.1 284,90.8 355.5,92.5" fill="none" stroke="#d8d840" stroke-width="1.4"/>
<line x1="1.2" y1="51.5" x2="1.2" y2="86.3" stroke="#d8d840" stroke-width="2.2"/>
<line x1="355.79999999999995" y1="62.0" x2="355.79999999999995" y2="245.5" stroke="#e8e830" stroke-width="1.4"/>
<line x1="71.69999999999999" y1="78.2" x2="71.69999999999999" y2="99.5" stroke="#a01818" stroke-width="1.3"/>
<rect x="64.5" y="100.0" width="10.5" height="12" fill="none" stroke="#b01c28" stroke-width="1"/>
<text x="69.4" y="110.1" font-family="Liberation Serif" font-size="11.5" font-weight="bold" fill="#98e060" text-anchor="middle">1</text>
<text transform="translate(73.80000000000001,155.5) rotate(-90)" font-family="Liberation Mono" font-size="12" fill="#80d040" textLength="42" lengthAdjust="spacingAndGlyphs">1.985km</text>
<line x1="283.70000000000005" y1="82.5" x2="283.70000000000005" y2="105.80000000000001" stroke="#a01818" stroke-width="1.3"/>
<rect x="278.5" y="106.30000000000001" width="10.5" height="12" fill="none" stroke="#b01c28" stroke-width="1"/>
<text x="283.4" y="116.4" font-family="Liberation Serif" font-size="11.5" font-weight="bold" fill="#98e060" text-anchor="middle">2</text>
<text transform="translate(289,164.3) rotate(-90)" font-family="Liberation Mono" font-size="12" fill="#80d040" textLength="44.10000000000002" lengthAdjust="spacingAndGlyphs">8.021km</text>
<line x1="357.20000000000005" y1="94.5" x2="357.20000000000005" y2="107.30000000000001" stroke="#a01818" stroke-width="1.3"/>
<rect x="349.5" y="107.80000000000001" width="10.5" height="12" fill="none" stroke="#b01c28" stroke-width="1"/>
<text x="354.4" y="117.9" font-family="Liberation Serif" font-size="11.5" font-weight="bold" fill="#98e060" text-anchor="middle">3</text>
<text transform="translate(360.4,169.9) rotate(-90)" font-family="Liberation Mono" font-size="12" fill="#80d040" textLength="47.900000000000006" lengthAdjust="spacingAndGlyphs">10.035km</text>
<text x="4.3" y="12.5" font-family="Liberation Sans" font-size="10" fill="#d0d0d0">dB</text>
<rect x="3" y="27.4" width="20.0" height="10" fill="#000"/>
<text x="4.3" y="35.4" font-family="Liberation Sans" font-size="10" fill="#d0d0d0" textLength="17.5" lengthAdjust="spacingAndGlyphs">52.5</text>
<rect x="3" y="57.900000000000006" width="20.0" height="10" fill="#000"/>
<text x="4.3" y="65.9" font-family="Liberation Sans" font-size="10" fill="#d0d0d0" textLength="17.5" lengthAdjust="spacingAndGlyphs">45.0</text>
<rect x="3" y="88.4" width="20.0" height="10" fill="#000"/>
<text x="4.3" y="96.4" font-family="Liberation Sans" font-size="10" fill="#d0d0d0" textLength="17.5" lengthAdjust="spacingAndGlyphs">37.5</text>
<rect x="3" y="118.9" width="20.0" height="10" fill="#000"/>
<text x="4.3" y="126.9" font-family="Liberation Sans" font-size="10" fill="#d0d0d0" textLength="17.5" lengthAdjust="spacingAndGlyphs">30.0</text>
<rect x="3" y="149.4" width="20.0" height="10" fill="#000"/>
<text x="4.3" y="157.4" font-family="Liberation Sans" font-size="10" fill="#d0d0d0" textLength="17.5" lengthAdjust="spacingAndGlyphs">22.5</text>
<rect x="3" y="179.9" width="20.0" height="10" fill="#000"/>
<text x="4.3" y="187.9" font-family="Liberation Sans" font-size="10" fill="#d0d0d0" textLength="17.5" lengthAdjust="spacingAndGlyphs">15.0</text>
<rect x="3" y="210.4" width="14.5" height="10" fill="#000"/>
<text x="4.3" y="218.4" font-family="Liberation Sans" font-size="10" fill="#d0d0d0" textLength="12" lengthAdjust="spacingAndGlyphs">7.5</text>
<rect x="65.0" y="232.5" width="14.4" height="11" fill="#000"/>
<text x="72.2" y="241.8" font-family="Liberation Sans" font-size="10" font-weight="normal" fill="#d8d8d8" text-anchor="middle" textLength="11" lengthAdjust="spacingAndGlyphs">2.0</text>
<rect x="137.0" y="232.5" width="14.4" height="11" fill="#000"/>
<text x="144.2" y="241.8" font-family="Liberation Sans" font-size="10" font-weight="normal" fill="#d8d8d8" text-anchor="middle" textLength="11" lengthAdjust="spacingAndGlyphs">4.1</text>
<rect x="209.0" y="232.5" width="14.4" height="11" fill="#000"/>
<text x="216.2" y="241.8" font-family="Liberation Sans" font-size="10" font-weight="normal" fill="#d8d8d8" text-anchor="middle" textLength="11" lengthAdjust="spacingAndGlyphs">6.1</text>
<rect x="281.0" y="232.5" width="14.4" height="11" fill="#000"/>
<text x="288.2" y="241.8" font-family="Liberation Sans" font-size="10" font-weight="normal" fill="#d8d8d8" text-anchor="middle" textLength="11" lengthAdjust="spacingAndGlyphs">8.2</text>
<rect x="351.25" y="232.5" width="17.9" height="11" fill="#000"/>
<text x="360.2" y="241.8" font-family="Liberation Sans" font-size="9.6" font-weight="bold" fill="#e8e8e8" text-anchor="middle" textLength="14.5" lengthAdjust="spacingAndGlyphs">10.2</text>
<rect x="423.25" y="232.5" width="17.9" height="11" fill="#000"/>
<text x="432.2" y="241.8" font-family="Liberation Sans" font-size="9.6" font-weight="bold" fill="#e8e8e8" text-anchor="middle" textLength="14.5" lengthAdjust="spacingAndGlyphs">12.3</text>
<rect x="495.25" y="232.5" width="17.9" height="11" fill="#000"/>
<text x="504.2" y="241.8" font-family="Liberation Sans" font-size="9.6" font-weight="bold" fill="#e8e8e8" text-anchor="middle" textLength="14.5" lengthAdjust="spacingAndGlyphs">14.3</text>
<rect x="567.25" y="232.5" width="17.9" height="11" fill="#000"/>
<text x="576.2" y="241.8" font-family="Liberation Sans" font-size="9.6" font-weight="bold" fill="#e8e8e8" text-anchor="middle" textLength="14.5" lengthAdjust="spacingAndGlyphs">16.3</text>
<rect x="639.25" y="232.5" width="17.9" height="11" fill="#000"/>
<text x="648.2" y="241.8" font-family="Liberation Sans" font-size="9.6" font-weight="bold" fill="#e8e8e8" text-anchor="middle" textLength="14.5" lengthAdjust="spacingAndGlyphs">18.4</text>
<rect x="701.5" y="232.5" width="15" height="11" fill="#000"/>
<text x="702.8" y="241.8" font-family="Liberation Sans" font-size="9.6" font-weight="bold" fill="#e8e8e8" textLength="12.5" lengthAdjust="spacingAndGlyphs">km</text>
</svg>
</div>
<!-- scrollbar -->
<div class="a" style="left:269px;top:278px;width:720px;height:12px;background:linear-gradient(#f4f4f4,#e8e8e8)"></div>
<div class="t" style="left:273px;top:279px;font-size:7px;color:#333">◂</div>
<div class="t" style="left:982px;top:279px;font-size:7px;color:#333">▸</div>
<div class="a" style="left:282.5px;top:279.3px;width:694.5px;height:10px;border:1px solid #b8b8b8;border-radius:2px;background:linear-gradient(#f2f2f2,#dcdcdc 60%,#d0d0d0)"></div>
<div class="t" style="left:627px;top:280px;font-size:6px;color:#555;letter-spacing:-0.5px">III</div>
<div class="a" style="left:282px;top:290px;width:44px;height:13px;border:1px solid #f8f8f8"></div>
<div class="t" style="left:287px;top:292px;font-size:9.5px;color:#333">0.000km</div>
<div class="t" style="left:634.5px;top:292px;font-size:9px;color:#333;letter-spacing:0">2.042km/div</div>
<div class="t" style="left:890.3px;top:292px;font-size:9.5px;color:#333;letter-spacing:-0.1px">20.420km</div>

<!-- bottom: EventList window -->
<div class="a" style="left:4px;top:337.5px;width:744px;height:122px;background:#c9d1d8"></div>
<div class="a" style="left:4px;top:337.5px;width:2.5px;height:121px;background:#5a6268"></div>
<div class="a" style="left:6.5px;top:337.5px;width:741px;height:121px;background:#d9e2ea"></div>
<div class="a" style="left:6.5px;top:337.7px;width:741px;height:20.7px;background:linear-gradient(#d8f0fc 0,#c6d2de 12%,#d2dce6 60%,#dde5ee 100%)"></div>
<svg class="a" style="left:12.5px;top:345.5px" width="12" height="9"><path d="M1.5,3 L9.5,1.5 L10.5,7.5 L2.5,8.5 Z" fill="#f8f6ea" stroke="#8a8a80" stroke-width="0.9"/><path d="M1,3.2 L2.2,8.6" stroke="#e8c030" stroke-width="1.8"/><path d="M6,1.8 L9.6,1.2 L9.9,3.2" fill="none" stroke="#606060" stroke-width="1.2"/><path d="M4,5 L7,4.6" stroke="#c8c8c0" stroke-width="0.8"/></svg>
<div class="t" style="left:27px;top:346px;font-size:9.5px;color:#58636e">EventList</div>
<div class="ibtn" style="left:671.5px;top:344.3px"><svg width="21" height="12" style="position:absolute;left:-1px;top:0px"><rect x="6.8" y="4.6" width="7.5" height="3.3" fill="#f4f6f8" stroke="#6a7480" stroke-width="1.3"/></svg></div>
<div class="ibtn" style="left:695px;top:344.3px"><svg width="21" height="12" style="position:absolute;left:-1px;top:0px"><rect x="7" y="2.2" width="7" height="6" fill="#c8ccd0" stroke="#6a7480" stroke-width="1.3"/></svg></div>
<div class="ibtn" style="left:719.5px;top:344.3px"><svg width="21" height="12" style="position:absolute;left:-1px;top:0px"><path d="M7.5,2.6 L9.3,2.6 L10.5,4 L11.7,2.6 L13.5,2.6 L11.7,5.3 L13.5,8 L11.7,8 L10.5,6.6 L9.3,8 L7.5,8 L9.3,5.3 Z" fill="none" stroke="#78828c" stroke-width="1"/></svg></div>
<div class="a" style="left:11px;top:359.5px;width:731px;height:92px;border:1.5px solid #6e7378;border-bottom-color:#a4a8ac;border-right-color:#b4b8bc;background:#fff"></div>
<div class="a" style="left:12.5px;top:361px;width:727px;height:18px;background:linear-gradient(#ffffff,#ffffff 60%,#f4f4f4)"></div>
<div class="a" style="left:12.5px;top:379px;width:727px;height:1px;background:#e0e0e0"></div>
<div class="a" style="left:12.5px;top:380.4px;width:698px;height:12.4px;background:#ebebeb"></div>
<div class="a" style="left:12.5px;top:392.8px;width:727px;height:1px;background:#ececec"></div>
<div class="a" style="left:12.5px;top:405px;width:727px;height:1px;background:#ececec"></div>
<div class="a" style="left:12.5px;top:417.4px;width:727px;height:1px;background:#ececec"></div>
<div class="a" style="left:12.5px;top:429.6px;width:727px;height:1px;background:#ececec"></div>
<div class="a" style="left:12.5px;top:442px;width:727px;height:1px;background:#ececec"></div>
<div class="a" style="left:113.4px;top:361px;width:1px;height:88px;background:#ececec"></div>
<div class="a" style="left:212.6px;top:361px;width:1px;height:88px;background:#ececec"></div>
<div class="a" style="left:312.2px;top:361px;width:1px;height:88px;background:#ececec"></div>
<div class="a" style="left:411.8px;top:361px;width:1px;height:88px;background:#ececec"></div>
<div class="a" style="left:511.4px;top:361px;width:1px;height:88px;background:#ececec"></div>
<div class="a" style="left:611px;top:361px;width:1px;height:88px;background:#ececec"></div>
<div class="a" style="left:710.5px;top:361px;width:1px;height:88px;background:#ececec"></div>
<div class="cell" style="left:18.4px;top:366.5px;font-size:8.5px">Event Order</div>
<div class="cell" style="left:117.6px;top:366.5px;font-size:8.5px">Distance(km)</div>
<div class="cell" style="left:217.6px;top:366.5px;font-size:8.5px">Segment(km)</div>
<div class="cell" style="left:316.8px;top:366.5px;font-size:8.5px">Loss(dB)</div>
<div class="cell" style="left:416.4px;top:366.5px;font-size:8.5px">Total Loss(dB)</div>
<div class="cell" style="left:516px;top:366.5px;font-size:8.5px">Slope(dB/km)</div>
<div class="cell" style="left:615px;top:366.5px;font-size:8.5px">Reflection(dB)</div>
<div class="cell" style="left:29.599999999999998px;top:382.3px;font-size:8.5px">(F)1</div>
<div class="cell" style="left:117.6px;top:382.3px;font-size:8.5px">0.000</div>
<div class="cell" style="left:217.6px;top:382.3px;font-size:8.5px">0.000</div>
<div class="cell" style="left:316.8px;top:382.3px;font-size:8.5px">0.136</div>
<div class="a" style="left:416.9px;top:387.8px;width:1.6px;height:0.9px;background:#555"></div><div class="a" style="left:419.4px;top:387.8px;width:1.6px;height:0.9px;background:#555"></div>
<div class="a" style="left:516.5px;top:387.8px;width:1.6px;height:0.9px;background:#555"></div><div class="a" style="left:519px;top:387.8px;width:1.6px;height:0.9px;background:#555"></div>
<div class="a" style="left:615.5px;top:387.8px;width:1.6px;height:0.9px;background:#555"></div><div class="a" style="left:618px;top:387.8px;width:1.6px;height:0.9px;background:#555"></div>
<div class="cell" style="left:29.599999999999998px;top:394.6px;font-size:8.5px">(F)2</div>
<div class="cell" style="left:117.6px;top:394.6px;font-size:8.5px">8.021</div>
<div class="cell" style="left:217.6px;top:394.6px;font-size:8.5px">8.021</div>
<div class="cell" style="left:316.8px;top:394.6px;font-size:8.5px">0.148</div>
<div class="cell" style="left:416.4px;top:394.6px;font-size:8.5px">1.512</div>
<div class="cell" style="left:516px;top:394.6px;font-size:8.5px">0.186</div>
<div class="a" style="left:615.5px;top:400.1px;width:1.6px;height:0.9px;background:#555"></div><div class="a" style="left:618px;top:400.1px;width:1.6px;height:0.9px;background:#555"></div>
<div class="cell" style="left:29.599999999999998px;top:406.90000000000003px;font-size:8.5px">(E)3</div>
<div class="cell" style="left:117.6px;top:406.90000000000003px;font-size:8.5px">10.035</div>
<div class="cell" style="left:217.6px;top:406.90000000000003px;font-size:8.5px">2.013</div>
<div class="a" style="left:317.3px;top:412.40000000000003px;width:1.6px;height:0.9px;background:#555"></div><div class="a" style="left:319.8px;top:412.40000000000003px;width:1.6px;height:0.9px;background:#555"></div>
<div class="cell" style="left:416.4px;top:406.90000000000003px;font-size:8.5px">2.058</div>
<div class="cell" style="left:516px;top:406.90000000000003px;font-size:8.5px">0.187</div>
<div class="cell" style="left:615px;top:406.90000000000003px;font-size:8.5px">-45.067</div>
<svg width="10" height="11" style="position:absolute;left:17.5px;top:381px"><path d="M1,1.5 H4 V9.5 H8.5" stroke="#222" stroke-width="1.2" fill="none"/></svg>
<svg width="10" height="11" style="position:absolute;left:17.5px;top:393.3px"><path d="M1,1.5 H4 V9.5 H8.5" stroke="#222" stroke-width="1.2" fill="none"/></svg>
<svg width="12" height="11" style="position:absolute;left:16.5px;top:405.6px"><path d="M0.5,9.5 H2.5 V1.5 H7 V9.5 H9.5" stroke="#222" stroke-width="1.2" fill="none"/></svg>

<!-- Thumbnail -->
<div class="a" style="left:4px;top:335.5px;width:990.5px;height:2.2px;background:#26384a"></div>
<div class="a" style="left:748px;top:337px;width:246.5px;height:122px;background:#c9d1d8"></div>
<div class="a" style="left:747.5px;top:336px;width:1.8px;height:122.5px;background:#3a4450"></div>
<div class="a" style="left:749.3px;top:337.5px;width:245px;height:121px;background:#d9e2ea"></div>
<div class="a" style="left:749.3px;top:337.7px;width:245px;height:20.7px;background:linear-gradient(#d8f0fc 0,#c6d2de 12%,#d2dce6 60%,#dde5ee 100%)"></div>
<svg class="a" style="left:756.5px;top:345.5px" width="12" height="9"><path d="M1.5,3 L9.5,1.5 L10.5,7.5 L2.5,8.5 Z" fill="#f8f6ea" stroke="#8a8a80" stroke-width="0.9"/><path d="M1,3.2 L2.2,8.6" stroke="#e8c030" stroke-width="1.8"/><path d="M6,1.8 L9.6,1.2 L9.9,3.2" fill="none" stroke="#606060" stroke-width="1.2"/><path d="M4,5 L7,4.6" stroke="#c8c8c0" stroke-width="0.8"/></svg>
<div class="t" style="left:770px;top:346px;font-size:9.5px;color:#58636e">Thumbnail</div>
<div class="ibtn" style="left:919.5px;top:344.3px"><svg width="21" height="12" style="position:absolute;left:-1px;top:0px"><rect x="6.8" y="4.6" width="7.5" height="3.3" fill="#f4f6f8" stroke="#6a7480" stroke-width="1.3"/></svg></div>
<div class="ibtn" style="left:943.5px;top:344.3px"><svg width="21" height="12" style="position:absolute;left:-1px;top:0px"><rect x="7" y="2.2" width="7" height="6" fill="#c8ccd0" stroke="#6a7480" stroke-width="1.3"/></svg></div>
<div class="ibtn" style="left:967.5px;top:344.3px"><svg width="21" height="12" style="position:absolute;left:-1px;top:0px"><path d="M7.5,2.6 L9.3,2.6 L10.5,4 L11.7,2.6 L13.5,2.6 L11.7,5.3 L13.5,8 L11.7,8 L10.5,6.6 L9.3,8 L7.5,8 L9.3,5.3 Z" fill="none" stroke="#78828c" stroke-width="1"/></svg></div>
<div class="a" style="left:755px;top:359.5px;width:235px;height:92px;border:1px solid #48b848"></div>
<div class="a" style="left:756px;top:360.5px;width:233px;height:90px;overflow:hidden">
<svg width="233" height="90" style="position:absolute;left:0;top:0">
<rect width="233" height="90" fill="#000"/>
<path d="M114.5,90 L114.5,49 L115,47.9 L116,50.3 L117,47.7 L118,48.4 L119,48.1 L120,48.2 L121,49.9 L122,49.5 L123,49.3 L124,48.4 L125,49.5 L126,47.4 L127,50.4 L128,49.1 L129,47.6 L130,48.4 L131,47.9 L132,48.4 L133,48.2 L134,49.1 L135,50.2 L136,47.6 L137,49.8 L138,50.3 L139,48.0 L140,49.4 L141,49.5 L142,49.1 L143,50.0 L144,49.1 L145,48.0 L146,48.0 L147,48.2 L148,49.8 L149,49.9 L150,49.0 L151,49.2 L152,47.6 L153,49.6 L154,50.1 L155,46.0 L156,49.0 L157,48.8 L158,47.9 L159,50.2 L160,49.1 L161,46.2 L162,46.4 L163,48.4 L164,49.1 L165,47.3 L166,50.0 L167,48.3 L168,49.6 L169,47.9 L170,48.7 L171,48.1 L172,47.6 L173,49.8 L174,47.9 L175,47.7 L176,48.2 L177,47.9 L178,48.4 L179,45.7 L180,50.5 L181,49.7 L182,48.3 L183,48.2 L184,50.3 L185,48.5 L186,47.3 L187,48.7 L188,47.7 L189,49.6 L190,49.3 L191,48.9 L192,50.0 L193,49.8 L194,48.5 L195,49.1 L196,48.1 L197,48.9 L198,48.8 L199,49.5 L200,48.1 L201,47.7 L202,48.6 L203,47.6 L204,48.3 L205,50.3 L206,48.3 L207,48.0 L208,48.6 L209,49.7 L210,47.6 L211,46.7 L212,50.1 L213,49.8 L214,47.7 L215,46.2 L216,48.0 L217,47.6 L218,48.8 L219,47.9 L220,48.3 L221,47.5 L222,48.1 L223,49.6 L224,48.7 L225,48.2 L226,48.5 L227,45.6 L228,49.4 L229,49.9 L230,48.4 L231,50.3 L232,49.6 L233,90 Z" fill="#8080ff"/>
<polyline points="0,30.5 113.5,33.6" fill="none" stroke="#a0a0d8" stroke-width="1.2"/>
<line x1="114.2" y1="22" x2="114.2" y2="90" stroke="#a0a0c8" stroke-width="1"/>
</svg>
</div>
<svg class="a" style="left:744px;top:336.5px" width="10" height="7"><path d="M1,0.5 L8,0.5 L4.5,5.5 Z" fill="#5a6a7a"/></svg>
</body></html>
